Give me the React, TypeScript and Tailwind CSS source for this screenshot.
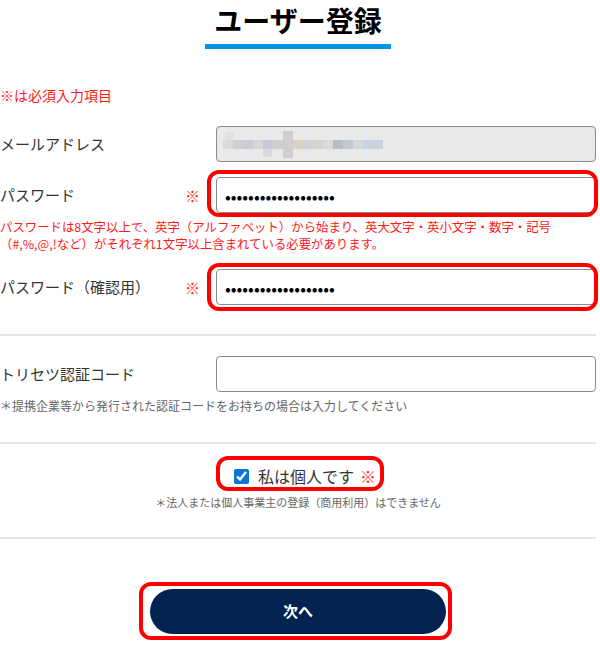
import { useState } from 'react'

const font = { fontFamily: '"Noto Sans CJK JP", "Noto Sans", sans-serif' }

// pixelated (blurred-out) mail address
const mosaic = [
  '#d9d9d9', '#cfcfcf', '#c9ccd2', '#d6d6d6', '#c6cad3', '#d2d0cc', '#bdb8b4', '#d8d2c6',
  '#cfd3d8', '#d5d3cd', '#dadada', '#b9bcc2', '#c3c8d0', '#d7d7d7', '#c5d2e2', '#cbd2dc',
]

function Mark() {
  return <span className="text-[15px] text-[#ff2a2a]">※</span>
}

function Highlight({ className }: { className: string }) {
  return (
    <span
      className={`pointer-events-none absolute rounded-[12px] border-4 border-[#ff0000] ${className}`}
    />
  )
}

function Row({
  label,
  required,
  children,
}: {
  label: string
  required?: boolean
  children: React.ReactNode
}) {
  return (
    <div className="flex items-center">
      <div className="w-[185px] text-[15px] text-[#333]">{label}</div>
      <div className="w-[31px]">{required && <Mark />}</div>
      <div className="relative flex-1">{children}</div>
    </div>
  )
}

const inputCls =
  'block h-[36px] w-full rounded-[4px] border border-[#8a8a8a] bg-white px-[9px] text-[13px] text-black outline-none'
const passCls =
  'block h-[36px] w-full rounded-[4px] border border-[#8a8a8a] bg-white px-[8px] text-[17px] text-black outline-none'

export default function App() {
  const [checked, setChecked] = useState(true)

  return (
    <div className="w-[596px] bg-white pb-[9px]" style={font}>
      <div className="flex flex-col items-center">
        <h1 className="text-[28px] font-bold leading-[40px] text-black">ユーザー登録</h1>
        <div className="mt-[4px] h-[5px] w-[186px] bg-[#0096e3]" />
      </div>

      <p className="mt-[36px] text-[14px] leading-[20px] text-[#ff1a1a]">※は必須入力項目</p>

      <div className="mt-[21px]">
        <Row label="メールアドレス">
          <div className="flex h-[36px] w-full items-center rounded-[4px] border border-[#8a8a8a] bg-[#e9e9e9] px-[6px]">
            <div className="relative flex">
              {mosaic.map((c, i) => (
                <span key={i} className="block h-[9px] w-[10px]" style={{ backgroundColor: c }} />
              ))}
              <span className="absolute left-[40px] top-[9px] block h-[8px] w-[9px] bg-[#dadada]" />
              <span className="absolute left-[60px] -top-[9px] block h-[27px] w-[10px] bg-[#cfcfcf]" />
              <span className="absolute left-[2px] -top-[8px] block h-[8px] w-[9px] bg-[#e0e0e0]" />
            </div>
          </div>
        </Row>
      </div>

      <div className="mt-[15px]">
        <Row label="パスワード" required>
          <input type="password" readOnly defaultValue="abcdefghijklmnopqrs" className={passCls} />
          <Highlight className="-left-[9px] -right-[2px] -top-[7px] -bottom-[4px]" />
        </Row>
      </div>

      <p className="mt-[6px] text-[12.4px] leading-[17px] text-[#ff1a1a]">
        パスワードは8文字以上で、英字（アルファベット）から始まり、英大文字・英小文字・数字・記号
        <br />
        （#,%,@,!など）がそれぞれ1文字以上含まれている必要があります。
      </p>

      <div className="mt-[16px]">
        <Row label="パスワード（確認用）" required>
          <input type="password" readOnly defaultValue="abcdefghijklmnopqrs" className={passCls} />
          <Highlight className="-left-[9px] -right-[2px] -top-[6px] -bottom-[6px]" />
        </Row>
      </div>

      <div className="mt-[29px] h-[2px] bg-[#e6e6e6]" />

      <div className="mt-[20px]">
        <Row label="トリセツ認証コード">
          <input type="text" className={inputCls} />
        </Row>
      </div>
      <p className="mt-[5px] text-[12px] leading-[17px] text-[#666]">
        ＊提携企業等から発行された認証コードをお持ちの場合は入力してください
      </p>

      <div className="mt-[28px] h-[2px] bg-[#e6e6e6]" />

      <div className="mt-[20px] flex justify-center">
        <label className="relative flex items-center pl-[14px]">
          <input
            type="checkbox"
            checked={checked}
            onChange={(e) => setChecked(e.target.checked)}
            className="h-[15px] w-[15px] accent-[#0b74d8]"
          />
          <span className="ml-[9px] text-[16px] leading-[24px] text-[#333]">私は個人です</span>
          <span className="ml-[6px] text-[16px] leading-[24px] text-[#ff2a2a]">※</span>
          <Highlight className="-left-[4px] -right-[8px] -top-[8px] -bottom-[3px]" />
        </label>
      </div>
      <p className="mt-[6px] text-center text-[11px] leading-[17px] text-[#666]">
        ＊法人または個人事業主の登録（商用利用）はできません
      </p>

      <div className="mt-[26px] h-[2px] bg-[#e6e6e6]" />

      <div className="mt-[50px] flex justify-center">
        <div className="relative">
          <button
            type="button"
            className="block h-[45px] w-[296px] rounded-full bg-[#02224f] text-[15px] font-bold text-white"
          >
            次へ
          </button>
          <Highlight className="-left-[11px] -right-[6px] -top-[7px] -bottom-[6px]" />
        </div>
      </div>
    </div>
  )
}
